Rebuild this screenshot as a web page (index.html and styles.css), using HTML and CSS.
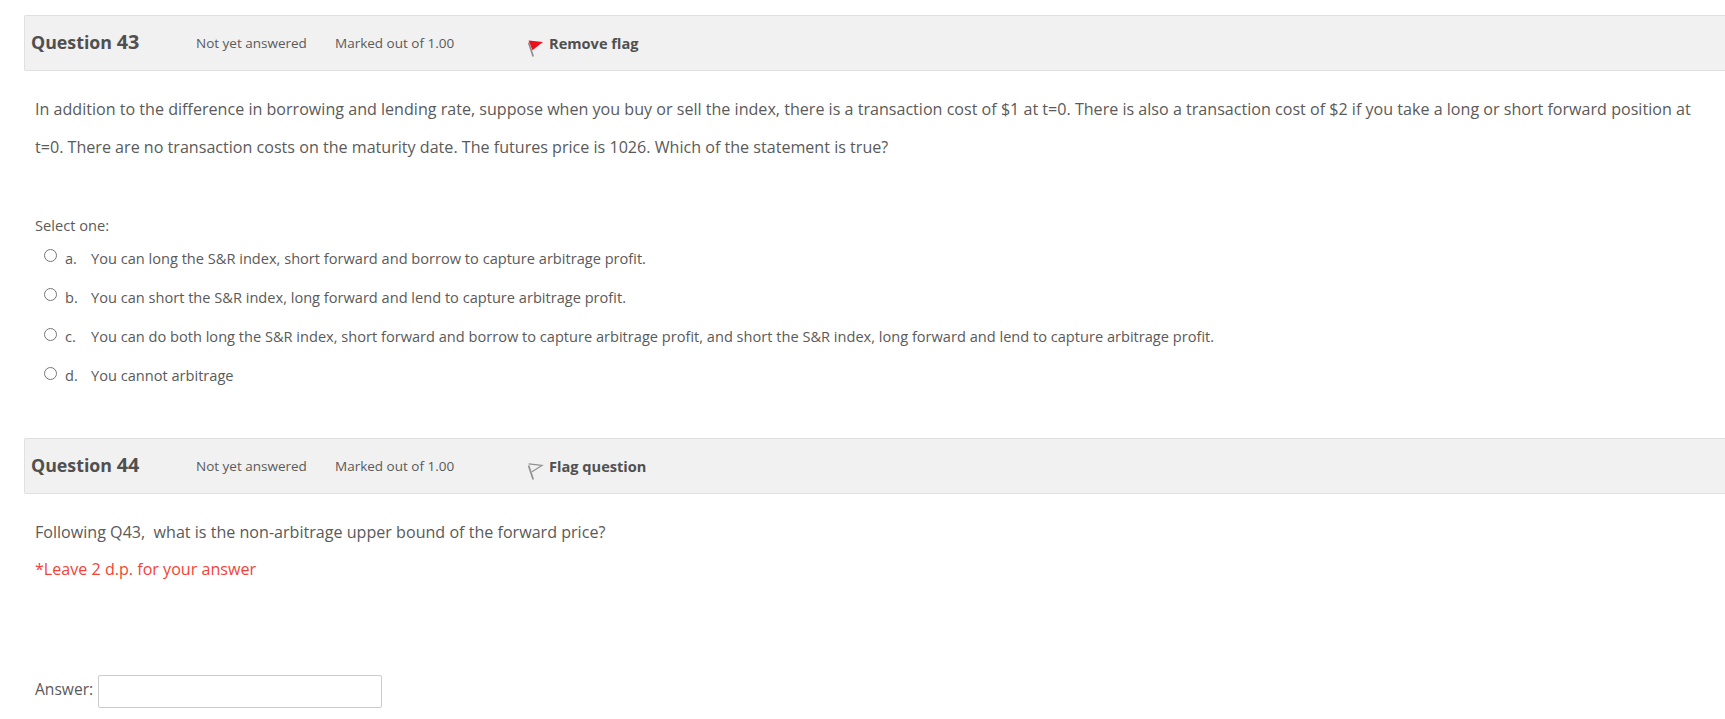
FILE: index.html
```html
<!DOCTYPE html>
<html lang="en">
<head>
  <meta charset="UTF-8">
  <title>Quiz</title>
  <link rel="stylesheet" href="styles.css">
</head>
<body>
  <div class="question">
    <div class="info">
      <h3 class="qno">Question <span class="num">43</span></h3>
      <div class="state">Not yet answered</div>
      <div class="grade">Marked out of 1.00</div>
      <div class="flag">
        <svg class="flag-icon" width="16" height="18" viewBox="0 0 16 18">
          <path d="M0.6 2.5 L5.2 16.5" stroke="#8f8f8f" stroke-width="1.7" fill="none"/>
          <path d="M0.6 0.4 L15 2 L4.4 10.2 Z" fill="#ee0f1b"/>
        </svg>
        <span>Remove flag</span>
      </div>
    </div>
    <div class="content">
      <p class="qtext">In addition to the difference in borrowing and lending rate, suppose when you buy or sell the index, there is a transaction cost of $1 at t=0. There is also a transaction cost of $2 if you take a long or short forward position at t=0. There are no transaction costs on the maturity date. The futures price is 1026. Which of the statement is true?</p>
      <div class="prompt">Select one:</div>
      <div class="answers">
        <label class="option"><input type="radio" name="q43"><span class="letter">a.</span><span>You can long the S&amp;R index, short forward and borrow to capture arbitrage profit.</span></label>
        <label class="option"><input type="radio" name="q43"><span class="letter">b.</span><span>You can short the S&amp;R index, long forward and lend to capture arbitrage profit.</span></label>
        <label class="option"><input type="radio" name="q43"><span class="letter">c.</span><span>You can do both long the S&amp;R index, short forward and borrow to capture arbitrage profit, and short the S&amp;R index, long forward and lend to capture arbitrage profit.</span></label>
        <label class="option"><input type="radio" name="q43"><span class="letter">d.</span><span>You cannot arbitrage</span></label>
      </div>
    </div>
  </div>

  <div class="question">
    <div class="info">
      <h3 class="qno">Question <span class="num">44</span></h3>
      <div class="state">Not yet answered</div>
      <div class="grade">Marked out of 1.00</div>
      <div class="flag">
        <svg class="flag-icon" width="16" height="18" viewBox="0 0 16 18">
          <path d="M0.6 2.5 L5.2 16.5" stroke="#8f8f8f" stroke-width="1.7" fill="none"/>
          <path d="M0.6 0.8 L14 2.4 L4 8.8" stroke="#8f8f8f" stroke-width="1.2" fill="none"/>
        </svg>
        <span>Flag question</span>
      </div>
    </div>
    <div class="content">
      <p class="qtext-short">Following Q43,&nbsp; what is the non-arbitrage upper bound of the forward price?</p>
      <p class="note">*Leave 2 d.p. for your answer</p>
      <div class="answer-row">
        <label for="q44">Answer:</label>
        <input type="text" id="q44">
      </div>
    </div>
  </div>
</body>
</html>
```

FILE: styles.css
```css
body {
  margin: 0;
  padding: 15px 0 0 24px;
  font-family: "Open Sans", sans-serif;
  font-size: 16.1px;
  line-height: 22px;
  color: #5a5a5a;
  background: #fff;
  overflow: hidden;
}
.question {
  margin-bottom: 43px;
}
.info {
  display: flex;
  align-items: center;
  height: 54px;
  background: #f1f1f1;
  border: 1px solid #e0e0e0;
  border-right: none;
  border-radius: 2px 0 0 2px;
  padding-left: 6px;
  font-size: 13.5px;
}
.qno {
  margin: 0;
  width: 165px;
  font-size: 17.8px;
  font-weight: 700;
  color: #505050;
  position: relative;
  top: -1px;
}
.qno .num {
  font-size: 19.8px;
}
.state {
  width: 139px;
}
.grade {
  width: 193px;
}
.flag {
  display: flex;
  align-items: center;
  font-weight: 700;
  font-size: 14.6px;
  color: #505050;
}
.flag-icon {
  margin-right: 5px;
  margin-top: 11px;
}
.content {
  padding-left: 11px;
}
.qtext {
  margin: 19px 0 0;
  padding-right: 15px;
  line-height: 38px;
}
.prompt {
  margin-top: 48px;
  font-size: 14.65px;
  height: 24px;
}
.option {
  display: flex;
  align-items: center;
  height: 39.25px;
  font-size: 14.6px;
  padding-left: 9px;
}
.option input {
  margin: 0 8px 4px 0;
  width: 13px;
  height: 13px;
}
.letter {
  width: 26px;
}
.qtext-short {
  margin: 27px 0 0;
}
.note {
  margin: 15px 0 0;
  color: #f44336;
}
.answer-row {
  display: flex;
  align-items: center;
  margin-top: 95px;
  font-size: 15.6px;
}
.answer-row label {
  position: relative;
  top: -3px;
}
.answer-row input {
  width: 284px;
  height: 33px;
  box-sizing: border-box;
  margin-left: 5px;
  border: 1px solid #ccc;
  border-radius: 2px;
  padding: 0 6px;
}
```
